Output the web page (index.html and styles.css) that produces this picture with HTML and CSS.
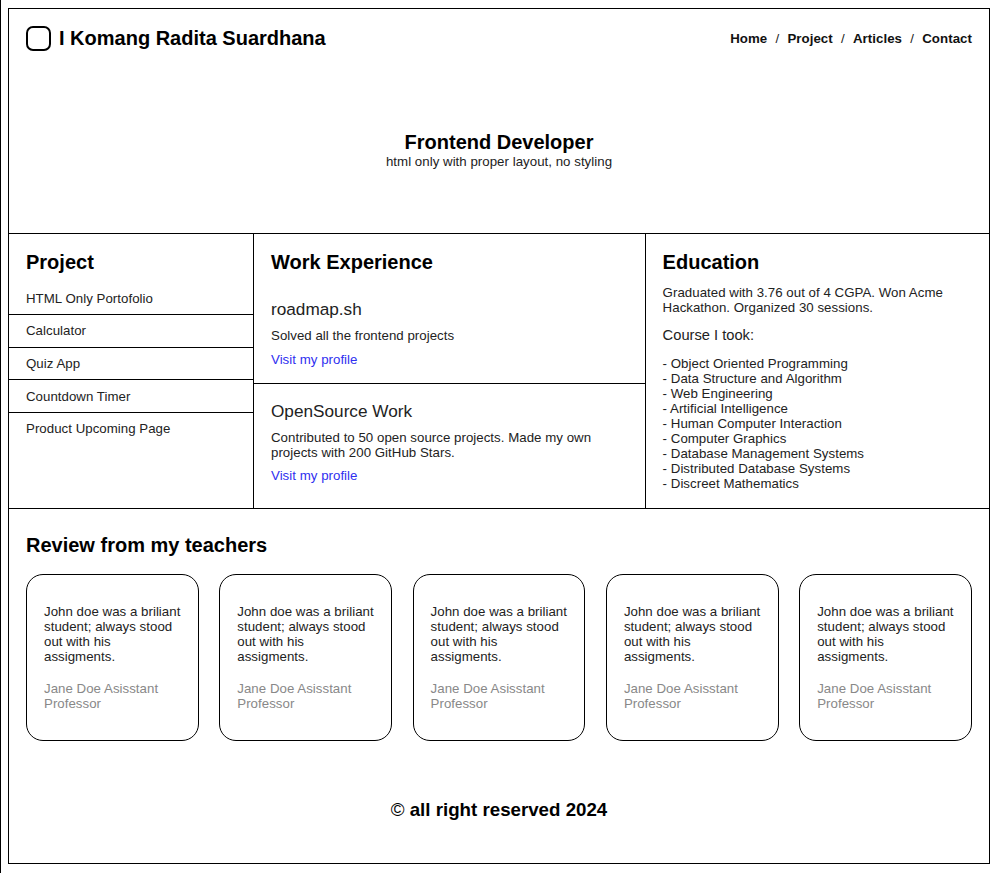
FILE: index.html
```html
<!DOCTYPE html>
<html lang="en">
<head>
<meta charset="utf-8">
<title>I Komang Radita Suardhana</title>
<link rel="stylesheet" href="styles.css">
</head>
<body>
<div class="page">
  <header class="top">
    <div class="brand"><span class="logo"></span><h1>I Komang Radita Suardhana</h1></div>
    <nav><a>Home</a><span>/</span><a>Project</a><span>/</span><a>Articles</a><span>/</span><a>Contact</a></nav>
  </header>
  <section class="hero"><h2>Frontend Developer</h2><p>html only with proper layout, no styling</p></section>
  <main class="columns">
    <section class="projects">
      <h2>Project</h2>
      <ul><li>HTML Only Portofolio</li><li>Calculator</li><li>Quiz App</li><li>Countdown Timer</li><li>Product Upcoming Page</li></ul>
    </section>
    <section class="work">
      <h2>Work Experience</h2>
      <article><h3>roadmap.sh</h3><p>Solved all the frontend projects</p><a>Visit my profile</a></article>
      <article><h3>OpenSource Work</h3><p>Contributed to 50 open source projects. Made my own<br>projects with 200 GitHub Stars.</p><a>Visit my profile</a></article>
    </section>
    <section class="education">
      <h2>Education</h2>
      <p>Graduated with 3.76 out of 4 CGPA. Won Acme<br>Hackathon. Organized 30 sessions.</p>
      <h3>Course I took:</h3>
      <ul><li>- Object Oriented Programming</li><li>- Data Structure and Algorithm</li><li>- Web Engineering</li><li>- Artificial Intelligence</li><li>- Human Computer Interaction</li><li>- Computer Graphics</li><li>- Database Management Systems</li><li>- Distributed Database Systems</li><li>- Discreet Mathematics</li></ul>
    </section>
  </main>
  <section class="reviews">
    <h2>Review from my teachers</h2>
    <div class="cards">
      <article><p>John doe was a briliant<br>student; always stood<br>out with his<br>assigments.</p><footer>Jane Doe Asisstant<br>Professor</footer></article>
      <article><p>John doe was a briliant<br>student; always stood<br>out with his<br>assigments.</p><footer>Jane Doe Asisstant<br>Professor</footer></article>
      <article><p>John doe was a briliant<br>student; always stood<br>out with his<br>assigments.</p><footer>Jane Doe Asisstant<br>Professor</footer></article>
      <article><p>John doe was a briliant<br>student; always stood<br>out with his<br>assigments.</p><footer>Jane Doe Asisstant<br>Professor</footer></article>
      <article><p>John doe was a briliant<br>student; always stood<br>out with his<br>assigments.</p><footer>Jane Doe Asisstant<br>Professor</footer></article>
    </div>
  </section>
  <footer class="copyright"><span class="mark">©</span> all right reserved 2024</footer>
</div>
</body>
</html>
```
FILE: styles.css
```css
* { box-sizing: border-box; margin: 0; padding: 0; }
html { border-left: 1px solid #000; height: 873px; background: #fff; }
body { padding: 8px 7px 0; font: 13.28px/15px "Liberation Sans", Arial, sans-serif; letter-spacing: 0.03px; color: #222; }
ul { list-style: none; }
h1, h2 { font-size: 20px; line-height: 24px; font-weight: bold; letter-spacing: 0; color: #000; white-space: nowrap; }
h3 { font-weight: normal; letter-spacing: 0; white-space: nowrap; }
.page { width: 982px; height: 856px; border: 1px solid #000; }
.top { display: flex; justify-content: space-between; align-items: center; height: 58px; padding: 0 17px; }
.brand { display: flex; align-items: center; gap: 8px; }
.logo { width: 25px; height: 25px; border: 2px solid #000; border-radius: 7px; }
nav { display: flex; gap: 8.2px; letter-spacing: 0.06px; }
nav a { font-weight: bold; color: #111; }
.hero { height: 166px; padding-top: 63px; text-align: center; }
.hero h2 { line-height: 24px; }
.columns { display: grid; grid-template-columns: 245px 392px 1fr; height: 276px; border-top: 1px solid #000; border-bottom: 1px solid #000; }
.columns h2 { padding: 16px 17px 0; }
.projects, .work { border-right: 1px solid #000; }
.projects ul { padding-top: 8.4px; }
.projects li { height: 32.6px; padding: 8.4px 17px 0; border-bottom: 1px solid #000; }
.projects li:last-child { border: 0; }
.work article { padding: 17px 17px 0; }
.work article:nth-of-type(1) { height: 110px; padding-top: 25px; border-bottom: 1px solid #000; }
.work h3 { font-size: 17.2px; line-height: 20px; margin-bottom: 9px; }
.work a { display: block; color: #2f2ff0; }
.work article:nth-of-type(1) a { margin-top: 9px; }
.work article:nth-of-type(2) a { margin-top: 8px; }
.education { margin-left: -0.4px; }
.education p { padding: 11px 17px 0; }
.education h3 { padding: 12px 17px 0; font-size: 14.7px; line-height: 17px; }
.education ul { padding: 12px 17px 0; }
.reviews { height: 232px; padding: 24px 17px 0; }
.cards { display: grid; grid-template-columns: repeat(5, 1fr); gap: 20.5px; margin-top: 17px; }
.cards article { height: 167px; padding: 29px 0 0 17px; border: 1px solid #000; border-radius: 17px; white-space: nowrap; }
.cards footer { margin-top: 17px; color: #888; }
.copyright { margin-top: 57px; text-align: center; font: bold 18.72px/24px "Liberation Sans", Arial, sans-serif; letter-spacing: 0; color: #000; }
.copyright .mark { font-weight: normal; }
```
